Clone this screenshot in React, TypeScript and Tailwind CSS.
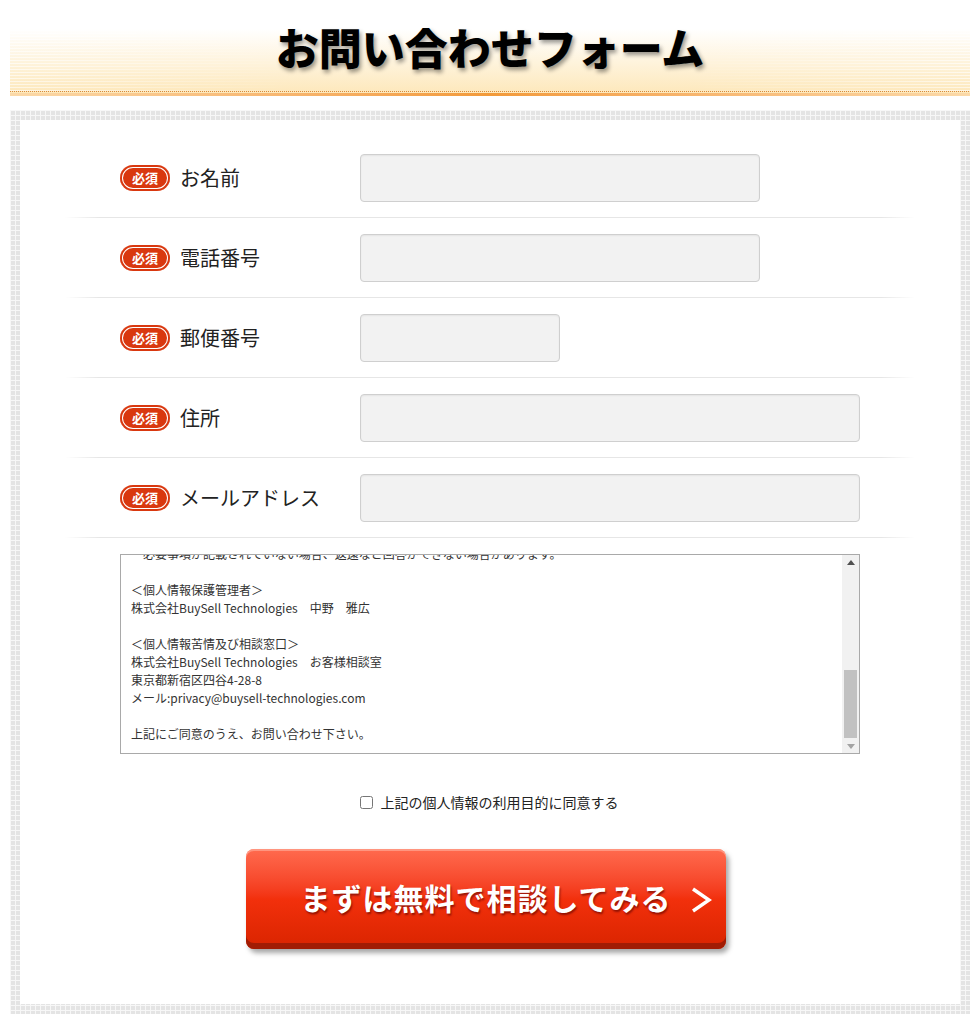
const fields = [
  { label: 'お名前', width: 'w-[400px]' },
  { label: '電話番号', width: 'w-[400px]' },
  { label: '郵便番号', width: 'w-[200px]' },
  { label: '住所', width: 'w-[500px]' },
  { label: 'メールアドレス', width: 'w-[500px]' },
];

const policyLines = [
  '・必要事項が記載されていない場合、返還など回答ができない場合があります。',
  '',
  '＜個人情報保護管理者＞',
  '株式会社BuySell Technologies　中野　雅広',
  '',
  '＜個人情報苦情及び相談窓口＞',
  '株式会社BuySell Technologies　お客様相談室',
  '東京都新宿区四谷4-28-8',
  'メール:privacy@buysell-technologies.com',
  '',
  '上記にご同意のうえ、お問い合わせ下さい。',
];

function Header() {
  return (
    <header className="px-[10px]">
      <div className="relative h-[96px] bg-gradient-to-b from-white from-30% to-[#fde7b8]">
        <div className="absolute inset-0 bg-[repeating-linear-gradient(180deg,rgba(255,255,255,0.6)_0px,rgba(255,255,255,0.6)_1px,transparent_1px,transparent_3px)] [mask-image:linear-gradient(90deg,#000_0%,transparent_30%,transparent_70%,#000_100%)]" />
        <div className="relative flex h-[91px] items-center justify-center pt-[2px]">
          <h1 className="text-[43px] font-black text-black [text-shadow:2px_3px_4px_rgba(0,0,0,0.4)]">
            お問い合わせフォーム
          </h1>
        </div>
        <div className="absolute bottom-[4px] left-0 right-0 h-px bg-[repeating-linear-gradient(90deg,#d98a3a_0px,#d98a3a_1px,transparent_1px,transparent_2px)]" />
        <div className="absolute bottom-0 left-0 right-0 h-[3px] bg-gradient-to-r from-[#fbd9a8] via-[#f29a3a] to-[#fbd9a8]" />
      </div>
    </header>
  );
}

function Badge() {
  return (
    <span className="flex h-[26px] w-[50px] items-center justify-center rounded-full bg-[#d9380f] text-[13px] font-bold text-white shadow-[inset_0_0_0_2px_#d9380f,inset_0_0_0_3px_#ffffff]">
      必須
    </span>
  );
}

function FieldRow({ label, width }: { label: string; width: string }) {
  return (
    <div>
      <div className="flex h-[79px] items-center pl-[55px]">
        <div className="flex w-[240px] items-center gap-[10px]">
          <Badge />
          <span className="text-[20px] text-[#222]">{label}</span>
        </div>
        <input
          type="text"
          className={`${width} h-[48px] rounded-[4px] border border-[#cfcfcf] bg-[#f2f2f2] shadow-[inset_0_1px_2px_rgba(0,0,0,0.06)] outline-none`}
        />
      </div>
      <div className="h-px bg-[linear-gradient(90deg,transparent,#e6e6e6_4%,#e6e6e6_96%,transparent)]" />
    </div>
  );
}

function PolicyBox() {
  return (
    <div className="ml-[55px] flex h-[200px] w-[740px] border border-[#a9a9a9] bg-white">
      <div className="flex flex-1 flex-col justify-end overflow-hidden pb-[10px] pl-[10px] text-[12px] leading-[18px] text-[#333]">
        {policyLines.map((line, i) => (
          <p key={i} className="h-[18px] shrink-0 whitespace-nowrap">
            {line}
          </p>
        ))}
      </div>
      <div className="flex w-[17px] flex-col items-center bg-[#f1f1f1]">
        <svg className="mt-[5px]" width="8" height="5" viewBox="0 0 8 5">
          <path d="M4 0 L8 5 L0 5 Z" fill="#505050" />
        </svg>
        <div className="mt-[105px] h-[68px] w-[13px] bg-[#c1c1c1]" />
        <svg className="mt-[6px]" width="8" height="5" viewBox="0 0 8 5">
          <path d="M0 0 L8 0 L4 5 Z" fill="#a3a3a3" />
        </svg>
      </div>
    </div>
  );
}

function SubmitButton() {
  return (
    <div className="flex justify-center pr-[8px]">
      <button className="relative h-[100px] w-[480px] rounded-[8px] bg-gradient-to-b from-[#ff6a4e] via-[#f2300c] to-[#d92400] shadow-[3px_4px_5px_rgba(0,0,0,0.35),inset_0_-6px_0_#a11c04,inset_0_2px_0_rgba(255,160,140,0.8)]">
        <span className="block pb-[4px] text-[30px] font-bold tracking-[1px] text-white [text-shadow:1px_2px_2px_rgba(90,0,0,0.6)]">
          まずは無料で相談してみる
        </span>
        <svg className="absolute right-[14px] top-[38px]" width="22" height="26" viewBox="0 0 22 26">
          <path d="M3 2 L19 13 L3 24" fill="none" stroke="#fff" strokeWidth="3.5" />
        </svg>
      </button>
    </div>
  );
}

export default function App() {
  return (
    <div className="min-h-[1025px] bg-white font-['Noto_Sans_CJK_JP',sans-serif]">
      <Header />
      <div className="mx-[10px] mt-[14px] bg-[#e4e4e4] bg-[linear-gradient(90deg,#f7f7f7_1px,transparent_1px),linear-gradient(180deg,#f7f7f7_1px,transparent_1px)] bg-size-[5px_5px] p-[10px]">
        <div className="bg-white px-[45px] pt-[18px] pb-[55px]">
          {fields.map((f) => (
            <FieldRow key={f.label} label={f.label} width={f.width} />
          ))}
          <div className="mt-[16px]">
            <PolicyBox />
          </div>
          <label className="mt-[38px] flex items-center justify-center gap-[8px] pr-[2px] text-[14px] text-[#222]">
            <input type="checkbox" className="h-[13px] w-[13px]" />
            上記の個人情報の利用目的に同意する
          </label>
          <div className="mt-[36px]">
            <SubmitButton />
          </div>
        </div>
      </div>
    </div>
  );
}
